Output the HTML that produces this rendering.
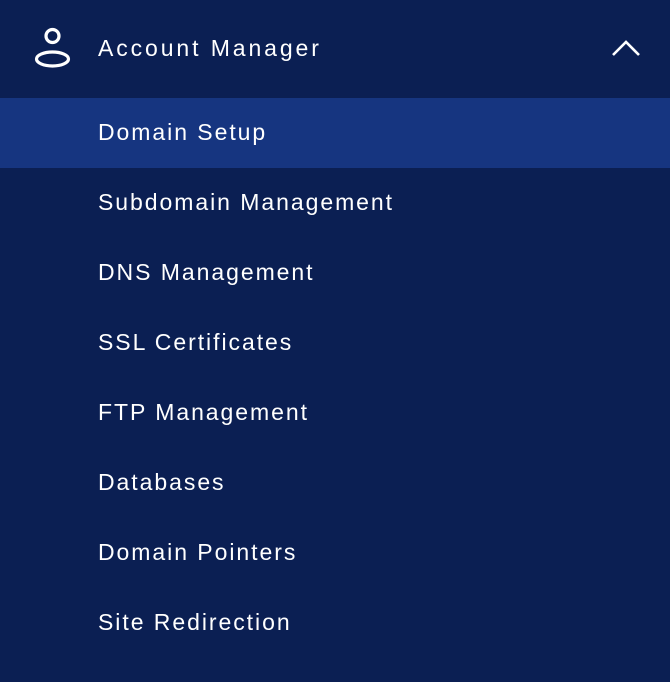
<!DOCTYPE html>
<html><head><meta charset="utf-8"><style>
html,body{margin:0;padding:0;}
body{width:670px;height:682px;background:#0b1f53;font-family:"Liberation Sans",sans-serif;color:#fff;overflow:hidden;position:relative;}
.hdr{position:absolute;left:0;top:0;width:670px;height:97px;}
.hdr .t{position:absolute;left:98px;top:34px;font-size:23px;letter-spacing:2.9px;line-height:28px;}
.row{position:absolute;left:0;width:670px;height:70px;}
.row span{position:absolute;left:98px;top:20px;font-size:23px;letter-spacing:1.95px;line-height:28px;}
.sel{background:#163580;}
</style></head><body>
<div class="hdr">
<svg width="670" height="97" style="position:absolute;left:0;top:0">
<circle cx="52.5" cy="36" r="6.5" fill="none" stroke="#fff" stroke-width="3.2"/>
<ellipse cx="52.5" cy="59" rx="16" ry="7" fill="none" stroke="#fff" stroke-width="3.2"/>
<polyline points="613,55 626,42 639,55" fill="none" stroke="#fff" stroke-width="2.6"/>
</svg>
<div class="t">Account Manager</div>
</div>
<div class="row sel" style="top:98px"><span>Domain Setup</span></div>
<div class="row" style="top:168px"><span>Subdomain Management</span></div>
<div class="row" style="top:238px"><span>DNS Management</span></div>
<div class="row" style="top:308px"><span>SSL Certificates</span></div>
<div class="row" style="top:378px"><span>FTP Management</span></div>
<div class="row" style="top:448px"><span>Databases</span></div>
<div class="row" style="top:518px"><span>Domain Pointers</span></div>
<div class="row" style="top:588px"><span>Site Redirection</span></div>
</body></html>
